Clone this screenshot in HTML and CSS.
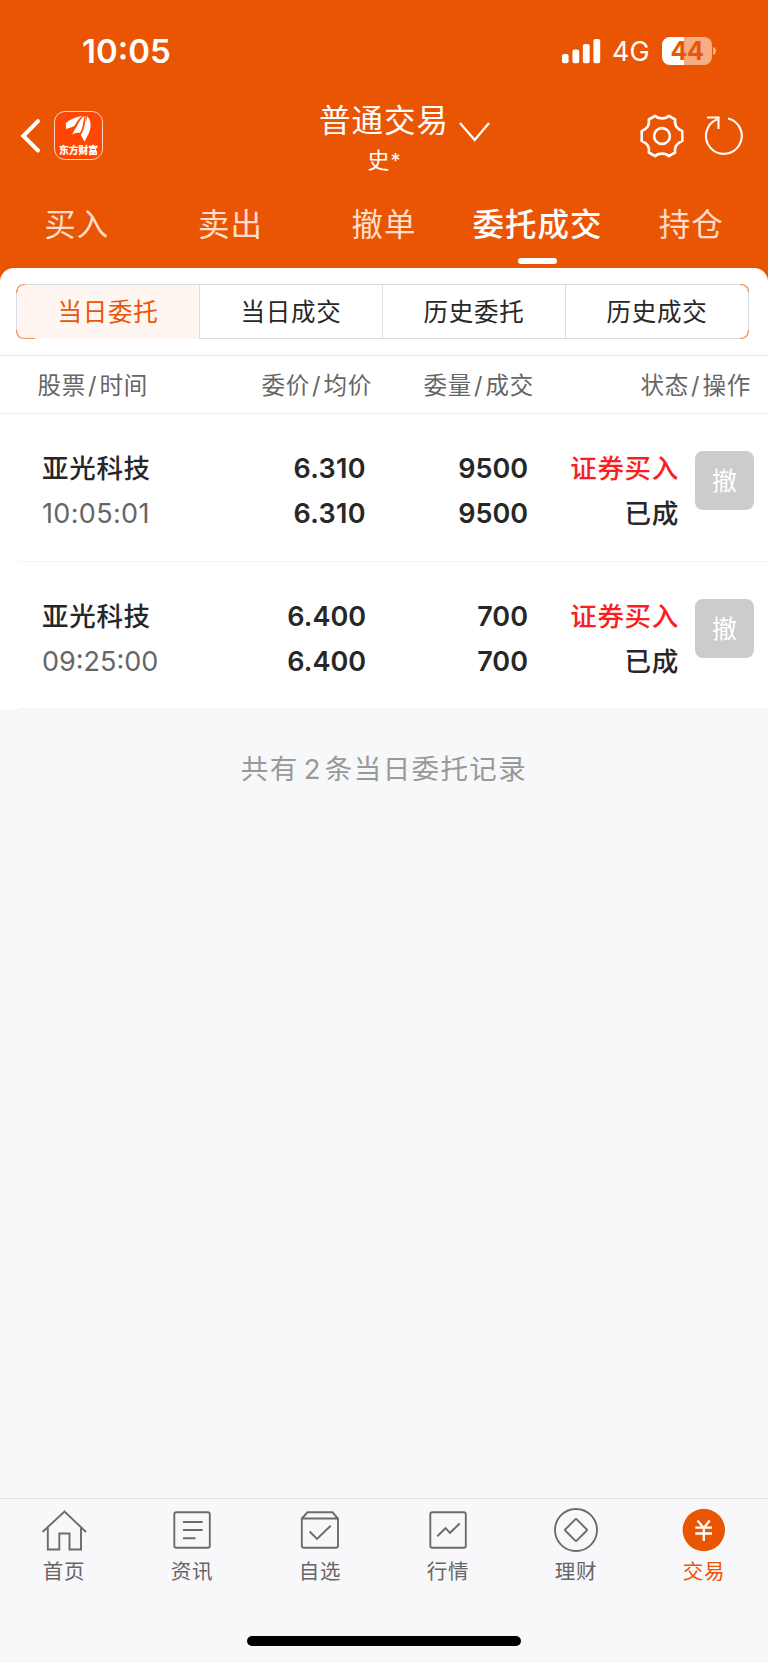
FILE: index.html
```html
<!DOCTYPE html>
<html lang="zh-CN">
<head>
<meta charset="utf-8">
<title>普通交易</title>
<link rel="stylesheet" href="styles.css">
</head>
<body>
<div class="app">
  <header class="top">
    <div class="status">
      <span class="clock">10:05</span>
      <div class="status-right">
        <svg class="signal" width="39" height="25" viewBox="0 0 39 25" fill="#fff">
          <rect x="0" y="15" width="6.6" height="9.2" rx="2"/><rect x="10.4" y="10.4" width="6.8" height="13.8" rx="2"/><rect x="20.9" y="5" width="6.8" height="19.2" rx="2"/><rect x="31.4" y="0" width="6.8" height="24.2" rx="2"/>
        </svg>
        <span class="network">4G</span>
        <div class="battery"><span>44</span></div>
        <svg class="battery-tip" width="4" height="10" viewBox="0 0 4 10"><path d="M0 1c4 1 4 7 0 8z" fill="#f6ad84"/></svg>
      </div>
    </div>
    <div class="nav">
      <svg class="back" width="22" height="36" viewBox="0 0 22 36" fill="none" stroke="#fff" stroke-width="4" stroke-linecap="round" stroke-linejoin="miter"><path d="M18 3.2L3.3 18 18 32.5"/></svg>
      <div class="logo">
        <svg width="28" height="28" viewBox="0 0 28 28" fill="#fff">
          <path d="M1.200 14.300L.8 8C5 4.500 11 2.200 17.200 1.100C13.500 4 11.500 7.800 9.300 11C6.500 13 3.300 12.600 1.200 14.300z"/>
          <path d="M7.500 19.500C7.800 17 9.600 15 11.200 12.500C13.500 8.500 15.400 3.500 19.600 .8C18.200 6 18.200 13 15 17.800C12.500 18 9.600 17.800 7.500 19.500z"/>
          <path d="M19.500 27C18.800 24.300 16.600 22.500 15.800 20C19 15 20.700 8 20.400 1.200L21.100 1L21.600 8L22.200 1.200C27 5.500 26.200 14 23.200 19.600C21.600 22.500 20.500 24.800 19.500 27z"/>
        </svg>
        <span>东方财富</span>
      </div>
      <div class="account">
        <div class="title">普通交易</div>
        <div class="user">史<i>*</i></div>
      </div>
      <svg class="chevron" width="32" height="22" viewBox="0 0 32 22" fill="none" stroke="#fff" stroke-width="2.3"><path d="M1 2l14.700 17L30 2"/></svg>
      <svg class="gear" width="46" height="46" viewBox="0 0 46 46" fill="none" stroke="#fff" stroke-width="2.600" stroke-linejoin="round">
        <circle cx="23" cy="23" r="7.900"/>
        <path d="M16.200 2.800C19 6.200 27 6.200 29.800 2.800L36.200 6.500C35.200 13 38 15.500 43.300 18.100V27.900C38 30.500 35.200 33 36.200 39.500L29.800 43.200C27 39.800 19 39.800 16.200 43.200L9.800 39.500C10.800 33 8 30.500 2.700 27.900V18.100C8 15.500 10.800 13 9.800 6.500Z"/>
      </svg>
      <svg class="refresh" width="40" height="42" viewBox="0 0 40 42" fill="none" stroke="#fff" stroke-width="2.100"><path d="M24 3.500A17.900 17.900 0 1 1 13 4.400M3 2.500H14.500V14"/></svg>
    </div>
    <nav class="tabs">
      <span>买入</span><span>卖出</span><span>撤单</span><span class="active">委托成交</span><span>持仓</span>
    </nav>
  </header>
  <main class="sheet">
    <div class="segments">
      <span class="on">当日委托</span><span>当日成交</span><span>历史委托</span><span>历史成交</span>
      <svg class="corners" width="733" height="55" viewBox="0 0 733 55" fill="none" stroke="#ee9468" stroke-width="1.200"><path d="M.5 9Q.5 .5 9 .5M.5 46Q.5 54.500 9 54.500H19M724 .5Q732.500 .5 732.500 8M732.500 46Q732.500 54.500 724 54.500"/></svg>
    </div>
    <div class="head">
      <span>股票<i>/</i>时间</span><span>委价<i>/</i>均价</span><span>委量<i>/</i>成交</span><span>状态<i>/</i>操作</span>
    </div>
    <section class="order">
      <div class="stock"><b>亚光科技</b><time class="spaced">10:05:01</time></div>
      <div class="num spaced"><span>6.310</span><span>6.310</span></div>
      <div class="num"><span>9500</span><span>9500</span></div>
      <div class="state"><b class="buy">证券买入</b><b>已成</b></div>
      <button class="cancel">撤</button>
    </section>
    <section class="order">
      <div class="stock"><b>亚光科技</b><time>09:25:00</time></div>
      <div class="num"><span>6.400</span><span>6.400</span></div>
      <div class="num"><span>700</span><span>700</span></div>
      <div class="state"><b class="buy">证券买入</b><b>已成</b></div>
      <button class="cancel">撤</button>
    </section>
  </main>
  <p class="summary">共有<i>2</i>条当日委托记录</p>
  <footer class="bottom">
    <nav class="dock">
      <div><svg width="48" height="48" viewBox="0 0 48 48"><path d="M2.500 25L24.500 4.500L46 25M7.800 21V42.500H19.300V26.500H29.500V42.500H41V21"/></svg><span>首页</span></div>
      <div><svg width="48" height="48" viewBox="0 0 48 48"><rect x="6.300" y="5.300" width="35.500" height="35.500" rx="2"/><path d="M15 15H34.500M15 23H34.500M15 31.200H27.500"/></svg><span>资讯</span></div>
      <div><svg width="48" height="48" viewBox="0 0 48 48"><path d="M5.800 11.500L11.500 5.300H36.500L42 11.500V38.800Q42 40.800 40 40.800H7.800Q5.800 40.800 5.800 38.800zM5.800 11.500H42M13.700 24.500L21 32L34.700 18.800"/></svg><span>自选</span></div>
      <div><svg width="48" height="48" viewBox="0 0 48 48"><rect x="6.300" y="5.300" width="35.500" height="35.500" rx="2"/><path d="M13.300 29.200L21.500 21.200L26 25.800L35.700 16.500"/></svg><span>行情</span></div>
      <div><svg width="48" height="48" viewBox="0 0 48 48"><circle cx="24" cy="23" r="21"/><rect x="16" y="15" width="16" height="16" rx="1" transform="rotate(45 24 23)"/></svg><span>理财</span></div>
      <div class="current"><svg width="48" height="48" viewBox="0 0 48 48"><circle class="disc" cx="23.800" cy="23" r="21.200"/><path class="yen" d="M17.500 13.500L23.800 21L29.700 13.500M15.300 20.700H32M15.300 26.500H32M23.800 21V34"/></svg><span>交易</span></div>
    </nav>
    <div class="home-bar"></div>
  </footer>
</div>
</body>
</html>
```
FILE: styles.css
```css
* { box-sizing: border-box; }
body { margin: 0; background: #f7f8fa; font-family: Inter, "Noto Sans CJK SC", sans-serif; color: #272727; }
i { font-style: normal; }
b { font-weight: 500; }
.app { display: flex; flex-direction: column; width: 768px; height: 1663px; overflow: hidden; }

.top { height: 282px; flex: none; background: #ea5504; color: #fff; }
.status { display: flex; justify-content: space-between; height: 102px; padding: 0 51px 0 82px; }
.clock { margin-top: 31px; font-size: 33px; line-height: 40px; font-weight: 600; }
.status-right { display: flex; align-items: flex-start; }
.signal { margin-top: 39px; }
.network { width: 50px; margin: 33px 0 0 11px; font-size: 27px; line-height: 38px; }
.battery { width: 50px; height: 28px; margin-top: 37px; border-radius: 8px; background: linear-gradient(90deg, #fff 22px, #f6ad84 22px); color: #ea5504; font-size: 25px; line-height: 29px; font-weight: 700; text-align: center; letter-spacing: -.3px; }
.battery-tip { margin: 46px 0 0 1px; }

.nav { display: flex; align-items: flex-start; height: 84px; padding-left: 20px; }
.back { margin-top: 16px; }
.logo { display: flex; flex-direction: column; align-items: center; width: 49px; height: 49px; margin: 9px 0 0 12px; padding-top: 3px; border: 1px solid #ffd5c5; border-radius: 11px; background: #ff4602; }
.logo span { font-family: "Noto Sans CJK SC", sans-serif; font-size: 9.800px; line-height: 12px; font-weight: 900; white-space: nowrap; margin-top: 1px; }
.logo svg { flex: none; }
.account { width: 132px; margin-left: 215px; text-align: center; }
.title { margin-top: -1px; font-size: 31.500px; line-height: 40px; letter-spacing: 1px; white-space: nowrap; }
.user { margin-top: 5px; font-size: 22px; line-height: 28px; }
.user i { font-size: 20px; margin-left: 1px; }
.chevron { margin: 19px 0 0 9px; }
.gear { margin: 11px 0 0 148px; }
.refresh { margin: 13px 0 0 19px; }

.tabs { display: grid; grid-template-columns: repeat(5, 1fr); height: 82px; padding-top: 16px; }
.tabs span { display: flex; flex-direction: column; align-items: center; font-size: 31.500px; line-height: 46px; letter-spacing: 1px; color: #ffddca; white-space: nowrap; }
.tabs .active { color: #fff; font-weight: 500; }
.tabs .active::after { content: ""; width: 39px; height: 6px; margin-top: 10px; border-radius: 3px; background: #fff; }

.sheet { flex: none; margin-top: -14px; background: #fff; border-radius: 14px 14px 0 0; height: 441px; padding-top: 16px; }
.segments { position: relative; display: grid; grid-template-columns: 182px 183px 183px 183px; width: 733px; height: 55px; margin-left: 16px; border: 1px solid #dadce3; border-radius: 9px; }
.corners { position: absolute; left: -1px; top: -1px; }
.segments span { font-size: 24.500px; line-height: 54px; text-align: center; letter-spacing: .7px; }
.segments span + span { border-left: 1px solid #dadce3; }
.segments .on { background: #fff5f1; color: #ea5504; border-radius: 8px 0 0 8px; }
.head { display: grid; grid-template-columns: 148px 224px 162px 217px; height: 59px; margin-top: 16px; border-top: 1px solid #e3e4e6; border-bottom: 1px solid #ededef; color: #666; font-size: 23.500px; line-height: 59px; letter-spacing: .8px; text-align: right; }
.head i { margin: 0 2px; }

.order { display: grid; grid-template-columns: 184px 140px 162px 151px 78px; height: 148px; margin-left: 20px; padding-left: 22px; border-bottom: 1px solid #f3f3f4; font-size: 26.500px; }
.order + .order { height: 147px; }
.order > div { display: flex; flex-direction: column; padding-top: 32px; line-height: 45px; white-space: nowrap; }
.order b { letter-spacing: .7px; }
.stock time { color: #666; font-size: 27px; }
.num { text-align: right; font-weight: 600; font-size: 27px; }
.order .spaced { letter-spacing: .35px; }
.state { text-align: right; }
.order .buy { color: #fb1e20; }
.cancel { width: 59px; height: 59px; margin: 37px 0 0 16px; padding: 0; border: 0; border-radius: 8px; background: #ccc; color: #fff; font: 25px/56px Inter, "Noto Sans CJK SC", sans-serif; }

.summary { margin: 40px 0 0; color: #999; font-size: 27.500px; line-height: 40px; letter-spacing: 1.400px; text-align: center; }
.summary i { margin: 0 3px 0 5px; }

.bottom { margin-top: auto; height: 165px; background: #f8f8fb; border-top: 1px solid #e1e1e3; }
.dock { display: grid; grid-template-columns: repeat(6, 1fr); height: 137px; padding-top: 8px; }
.dock div { display: flex; flex-direction: column; align-items: center; color: #666; font-size: 20.500px; line-height: 30px; letter-spacing: .8px; }
.dock svg { fill: none; stroke: #6b6b6b; stroke-width: 1.900; }
.dock span { margin-top: 2px; }
.dock .current { color: #ea5504; }
.dock .disc { fill: #ea5504; stroke: none; }
.dock .yen { stroke: #fff; stroke-width: 2.300; }
.home-bar { width: 274px; height: 10px; margin: 0 auto; border-radius: 5px; background: #000; }
```
